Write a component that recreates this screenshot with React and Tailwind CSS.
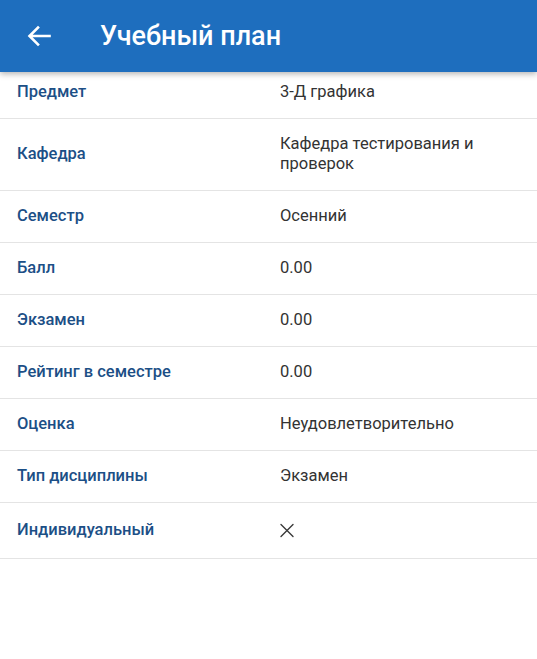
const rows = [
  ['Предмет', '3-Д графика'],
  ['Кафедра', 'Кафедра тестирования и проверок'],
  ['Семестр', 'Осенний'],
  ['Балл', '0.00'],
  ['Экзамен', '0.00'],
  ['Рейтинг в семестре', '0.00'],
  ['Оценка', 'Неудовлетворительно'],
  ['Тип дисциплины', 'Экзамен'],
  ['Индивидуальный', null],
]

function Cross() {
  return (
    <svg width="14" height="24" viewBox="0 0 14 24" fill="none" stroke="#3a3a3a" strokeWidth="1.4" strokeLinecap="round">
      <path d="M1 6.5 L13 18.5 M13 6.5 L1 18.5" />
    </svg>
  )
}

export default function App() {
  return (
    <div className="min-h-[659px] bg-white" style={{ fontFamily: 'Roboto, "Noto Sans", sans-serif' }}>
      <header className="relative z-10 h-[72px] bg-[#1e6ebe] flex items-center shadow-[0_2px_6px_rgba(0,0,0,0.3)]">
        <button className="ml-[27px] w-[24px] h-[24px] flex items-center justify-center">
          <svg width="24" height="22" viewBox="0 0 24 22" fill="none" stroke="white" strokeWidth="2.6" strokeLinecap="square">
            <path d="M22.5 11 H3 M11 2.5 L2.5 11 L11 19.5" />
          </svg>
        </button>
        <h1 className="ml-[49px] text-white text-[27px] font-medium">Учебный план</h1>
      </header>
      <div>
        {rows.map(([label, value], i) => (
          <div key={label} className={`flex items-center border-b-[1.5px] border-[#e4e4e4] px-[17px] ${i === 0 ? 'pt-[10px] pb-[15.5px]' : 'py-[15.5px]'}`}>
            <div className="w-[263px] shrink-0 text-[16.5px] leading-[20px] font-medium text-[#1c4f86]">{label}</div>
            <div className="flex-1 pr-[30px] text-[16.5px] leading-[20px] text-[#333]">
              {value === null ? <Cross /> : value}
            </div>
          </div>
        ))}
      </div>
    </div>
  )
}
